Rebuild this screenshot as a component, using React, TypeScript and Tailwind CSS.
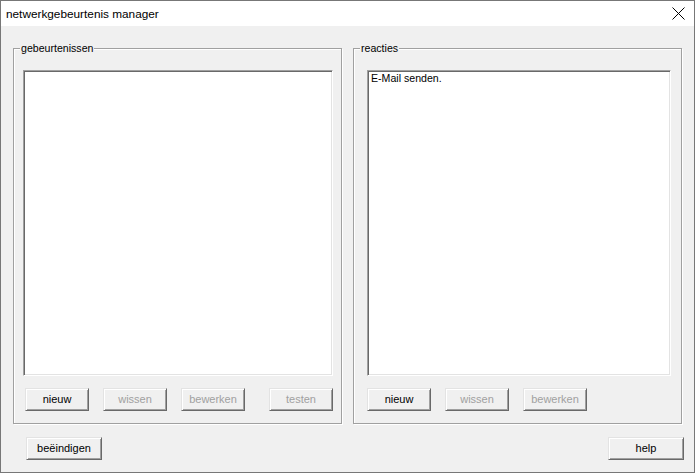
import React from 'react';

// Win32-style dialog: "netwerkgebeurtenis manager"

const font = { fontFamily: '"Liberation Sans", Arial, sans-serif' };

function Button({ label, disabled, className = '' }: { label: string; disabled?: boolean; className?: string }) {
  return (
    <div
      className={
        'h-[23px] flex items-center justify-center bg-[#f0f0f0] border border-t-[#e3e3e3] border-l-[#e3e3e3] border-r-[#696969] border-b-[#696969] shadow-[inset_1px_1px_0_#ffffff,inset_-1px_-1px_0_#a0a0a0] text-[11px] leading-[13px] ' +
        (disabled ? 'text-[#a0a0a0] ' : 'text-black ') +
        className
      }
    >
      {label}
    </div>
  );
}

function ListBox({ className = '', children }: { className?: string; children?: React.ReactNode }) {
  return (
    <div
      className={
        'h-[306px] bg-white border border-t-[#a0a0a0] border-l-[#a0a0a0] border-r-white border-b-white shadow-[inset_1px_1px_0_#696969,inset_-1px_-1px_0_#e3e3e3] px-[3px] pt-[1px] text-[10.6px] leading-[13px] text-black ' +
        className
      }
    >
      {children}
    </div>
  );
}

function GroupBox({ title, className = '', children }: { title: string; className?: string; children: React.ReactNode }) {
  return (
    <div
      className={
        'relative w-[329px] h-[376px] border border-[#a0a0a0] shadow-[inset_1px_1px_0_#ffffff,1px_1px_0_#ffffff] flex flex-col pt-[21px] ' +
        className
      }
    >
      <span className="absolute -top-[7px] left-[6px] px-[1px] bg-[#f0f0f0] text-[10.6px] leading-[13px] text-black">
        {title}
      </span>
      {children}
    </div>
  );
}

export default function App() {
  return (
    <div className="w-[695px] h-[473px] border border-[#777777] flex flex-col bg-[#f0f0f0]" style={font}>
      {/* title bar */}
      <div className="h-[25px] bg-white flex items-center justify-between pl-[5px] pr-[8px] shrink-0">
        <span className="text-[11.8px] leading-[14px] text-black">netwerkgebeurtenis manager</span>
        <svg width="13" height="13" viewBox="0 0 13 13" className="mr-[1px]">
          <path d="M0.5 0.5 L12.5 12.5 M12.5 0.5 L0.5 12.5" stroke="#000" strokeWidth="1" fill="none" />
        </svg>
      </div>

      {/* body */}
      <div className="flex-1 flex flex-col px-[12px] pt-[22px]">
        <div className="flex gap-[11px]">
          <GroupBox title="gebeurtenissen" className="pl-[9px] pr-[8px]">
            <ListBox className="w-[310px]" />
            <div className="mt-[12px] flex w-[310px]">
              <Button label="nieuw" className="w-[64px] ml-[2px]" />
              <Button label="wissen" disabled className="w-[64px] ml-[14px]" />
              <Button label="bewerken" disabled className="w-[64px] ml-[14px]" />
              <Button label="testen" disabled className="w-[64px] ml-auto" />
            </div>
          </GroupBox>

          <GroupBox title="reacties" className="pl-[13px]">
            <ListBox className="w-[304px]">E-Mail senden.</ListBox>
            <div className="mt-[12px] flex gap-[14px]">
              <Button label="nieuw" className="w-[64px]" />
              <Button label="wissen" disabled className="w-[64px]" />
              <Button label="bewerken" disabled className="w-[64px]" />
            </div>
          </GroupBox>
        </div>

        <div className="-mx-[12px] mt-[13px] pl-[25px] pr-[10px] flex justify-between">
          <Button label="beëindigen" className="w-[76px]" />
          <Button label="help" className="w-[76px]" />
        </div>
      </div>
    </div>
  );
}
